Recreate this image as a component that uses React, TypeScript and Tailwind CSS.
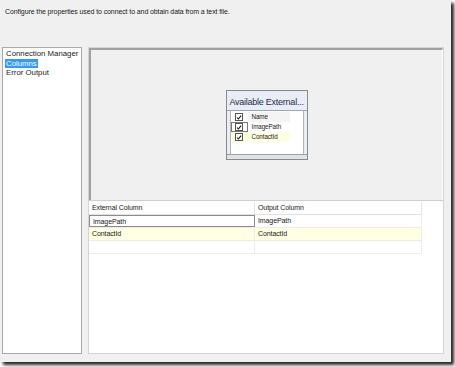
import React from "react";

const font = { fontFamily: '"Liberation Sans", Arial, sans-serif' };

const Check: React.FC = () => (
    <span className="w-[8px] h-[8px] border border-[#555] bg-white flex items-center justify-center">
        <svg viewBox="0 0 8 8" className="w-[7px] h-[7px]">
            <path d="M1.2 4 L3.2 6 L6.8 1.6" fill="none" stroke="#111" strokeWidth="1.4" />
        </svg>
    </span>
);

const fields = [
    { name: "Name", bg: "bg-[#f4f4f4]", focus: false },
    { name: "ImagePath", bg: "bg-white", focus: true },
    { name: "ContactId", bg: "bg-[#ffffe1]", focus: false },
];

const rows = [
    { ext: "ImagePath", out: "ImagePath", bg: "bg-white", focus: true },
    { ext: "ContactId", out: "ContactId", bg: "bg-[#ffffe1]", focus: false },
    { ext: "", out: "", bg: "bg-white", focus: false },
];

export default function App() {
    return (
        <div className="w-[455px] h-[367px] bg-white text-[#1a1a1a]" style={font}>
            <div className="w-[451px] h-[362px] bg-[#f0f0f0] shadow-[3px_3px_3px_rgba(0,0,0,0.85)] flex flex-col">
                <p className="pl-[5px] pt-[7px] text-[7px] leading-[9px] tracking-[-0.1px]">
                    Configure the properties used to connect to and obtain data from a text file.
                </p>

                <div className="flex mt-[31px] pl-[2px] h-[307px]">
                    {/* page list */}
                    <div className="w-[80px] h-full bg-white border border-[#a9a9a9] pt-[1px] pl-[2px] text-[7.8px] leading-[9.5px]">
                        <div className="px-[1px]">Connection Manager</div>
                        <div className="px-[1px] w-fit bg-[#3399ff] text-white">Columns</div>
                        <div className="px-[1px]">Error Output</div>
                    </div>

                    {/* right panel */}
                    <div className="ml-[6px] w-[356px] h-full flex flex-col border border-[#d4d4d4]">
                        {/* diagram */}
                        <div className="h-[152px] border-t-2 border-l-2 border-[#a0a0a0] border-r border-r-[#fff] flex justify-center pt-[40px]">
                            <div className="w-[82px] h-[70px] border border-[#8a8a8a] bg-[#e9eef6] flex flex-col">
                                <div className="h-[20px] border-b border-[#9aa6b6] flex items-end pb-[3px] pl-[3px] whitespace-nowrap text-[9px] leading-[10px] tracking-[-0.25px] text-[#1f2f45]">
                                    Available External...
                                </div>
                                <div className="flex-1 mx-[3px] bg-white border-x border-[#b5b5b5] flex flex-col pt-[1px]">
                                    {fields.map((f) => (
                                        <div key={f.name} className="flex h-[10px] text-[6.3px] leading-[10px] tracking-[-0.1px]">
                                            <div
                                                className={`w-[17px] flex items-center justify-center ${f.bg === "bg-[#ffffe1]" ? f.bg : "bg-white"} ${
                                                    f.focus ? "border border-[#777]" : ""
                                                }`}
                                            >
                                                <Check />
                                            </div>
                                            <div className={`w-[42px] pl-[4px] ${f.bg}`}>{f.name}</div>
                                        </div>
                                    ))}
                                </div>
                                <div className="h-[5px] bg-[#dfe3e8] border-t border-[#a0a0a0]" />
                            </div>
                        </div>

                        {/* column mapping grid */}
                        <div className="flex-1 bg-white border-t border-[#cfcfcf] pt-[1px]">
                            <div className="w-[333px] text-[7px] leading-[12px] tracking-[-0.1px]">
                                <div className="flex h-[13px] border-b border-[#e2e2e2]">
                                    <div className="w-[166px] pl-[3px] border-r border-[#e2e2e2]">External Column</div>
                                    <div className="flex-1 pl-[3px] border-r border-[#e2e2e2]">Output Column</div>
                                </div>
                                {rows.map((r, i) => (
                                    <div key={i} className={`flex h-[13px] border-b border-[#ececec] ${r.bg}`}>
                                        <div
                                            className={`w-[166px] pl-[3px] ${
                                                r.focus ? "border border-[#8c8c8c] leading-[11px]" : "border-r border-[#ececec]"
                                            }`}
                                        >
                                            {r.ext}
                                        </div>
                                        <div className="flex-1 pl-[3px] border-r border-[#ececec]">{r.out}</div>
                                    </div>
                                ))}
                            </div>
                        </div>
                    </div>
                </div>
            </div>
        </div>
    );
}
